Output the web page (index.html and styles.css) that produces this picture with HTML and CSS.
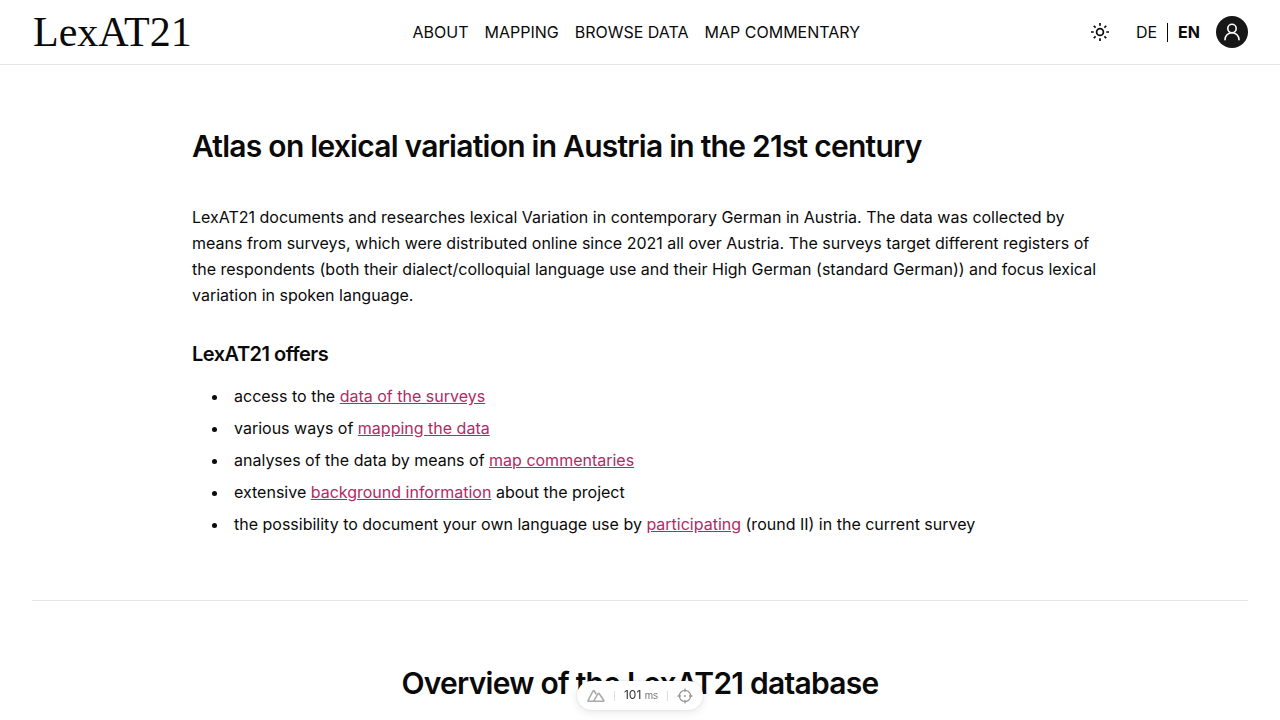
FILE: index.html
```html
<!DOCTYPE html>
<html lang="en">
<head>
<meta charset="utf-8">
<meta name="viewport" content="width=device-width, initial-scale=1">
<title>LexAT21</title>
<link rel="stylesheet" href="styles.css">
</head>
<body>
<header class="site-header">
  <a class="logo" href="#">LexAT21</a>
  <nav class="main-nav" aria-label="Main">
    <a href="#">ABOUT</a>
    <a href="#">MAPPING</a>
    <a href="#">BROWSE DATA</a>
    <a href="#">MAP COMMENTARY</a>
  </nav>
  <div class="tools">
    <button class="theme-button" type="button" aria-label="Toggle theme">
      <svg width="20" height="20" viewBox="0 0 20 20" fill="none" stroke="currentColor" stroke-width="1.7"><circle cx="10" cy="10" r="3.4"/><path d="M10 1v2.700M10 16.300V19M1 10h2.700M16.300 10H19M3.800 3.800l1.800 1.800M14.400 14.400l1.800 1.800M16.200 3.800l-1.800 1.800M5.600 14.400l-1.800 1.800"/></svg>
    </button>
    <div class="languages"><a href="#">DE</a><span class="bar"></span><a class="current" href="#">EN</a></div>
    <button class="user-button" type="button" aria-label="Account">
      <svg width="20" height="20" viewBox="0 0 20 20" fill="none" stroke="currentColor" stroke-width="1.600" stroke-linecap="round"><circle cx="10" cy="6.500" r="4.200"/><path d="M3 17.700c0-4 3-7 7-7s7 3 7 7"/></svg>
    </button>
  </div>
</header>
<main>
  <section class="intro">
    <h1>Atlas on lexical variation in Austria in the 21st century</h1>
    <p>LexAT21 documents and researches lexical Variation in contemporary German in Austria. The data was collected by means from surveys, which were distributed online since 2021 all over Austria. The surveys target different registers of the respondents (both their dialect/colloquial language use and their High German (standard German)) and focus lexical variation in spoken language.</p>
    <h2>LexAT21 offers</h2>
    <ul>
      <li>access to the <a href="#">data of the surveys</a></li>
      <li>various ways of <a href="#">mapping the data</a></li>
      <li>analyses of the data by means of <a href="#">map commentaries</a></li>
      <li>extensive <a href="#">background information</a> about the project</li>
      <li>the possibility to document your own language use by <a href="#">participating</a> (round II) in the current survey</li>
    </ul>
  </section>
  <section class="overview">
    <h2>Overview of the LexAT21 database</h2>
  </section>
</main>
<div class="devtools">
  <button type="button" aria-label="Toggle devtools">
    <svg width="18" height="14" viewBox="0 0 18 14" fill="none" stroke="currentColor" stroke-width="1.600" stroke-linejoin="round"><path d="M10 12.300H1.700Q.7 12.300 1.200 11.300L6 2Q6.700 1 7.400 2L9.200 5.300M6.500 12.300L11.100 4.700Q11.700 3.700 12.300 4.700L16.700 11.300Q17.200 12.300 16.200 12.300H10"/></svg>
  </button>
  <span class="divider"></span>
  <span class="timing">101 <small>ms</small></span>
  <span class="divider"></span>
  <button type="button" aria-label="Inspect component">
    <svg width="16" height="16" viewBox="0 0 16 16" fill="none" stroke="currentColor" stroke-width="1.300"><circle cx="8" cy="8" r="5.600"/><path d="M8 .5v3.500M8 12v3.500M.5 8H4M12 8h3.500"/><circle cx="8" cy="8" r="1" fill="currentColor" stroke="none"/></svg>
  </button>
</div>
</body>
</html>
```
FILE: styles.css
```css
* { box-sizing: border-box; }
body { margin: 0; background: #fff; color: #0a0a0a; font: 16px/24px Inter, "Liberation Sans", sans-serif; }
a { color: inherit; text-decoration: none; }
button { display: flex; align-items: center; justify-content: center; padding: 0; border: 0; background: none; color: inherit; font: inherit; cursor: pointer; }
.site-header { display: flex; justify-content: space-between; align-items: center; min-height: 65px; padding: 0 32px; border-bottom: 1px solid #e5e5e5; }
.logo { padding: 0 1px; font: 42px/48px "Liberation Serif", serif; }
.main-nav { display: flex; gap: 16px; }
.tools { display: flex; align-items: center; justify-content: flex-end; gap: 16px; }
.theme-button { width: 40px; height: 40px; }
.languages { display: flex; align-items: center; gap: 10px; }
.bar { width: 1px; height: 19px; background: currentColor; }
.current { font-weight: 700; }
.user-button { width: 32px; height: 32px; border-radius: 50%; background: #171717; color: #fff; }
.intro { max-width: 912px; margin: 0 auto; padding: 63px 0 64px; }
@media (min-width: 960px) { .intro { margin-left: calc(50% - 448px); } }
h1, .overview h2 { margin: 0; font-size: 30px; line-height: 36px; font-weight: 600; letter-spacing: -0.025em; }
.intro p { margin: 40px 0 32px; line-height: 26px; }
.intro h2 { margin: 0; font-size: 20px; line-height: 28px; font-weight: 600; letter-spacing: -0.025em; }
ul { margin: 16px 0 0; padding-left: 37px; }
li { padding-left: 5px; }
li + li { margin-top: 8px; }
li a { color: #b02a66; text-decoration: underline; }
.overview { margin: 0 32px; padding: 64px 0; border-top: 1px solid #e5e5e5; text-align: center; }
.devtools { position: fixed; bottom: 10px; left: 50%; transform: translateX(-50%); display: flex; align-items: center; gap: 9px; height: 29px; padding: 0 10px; border-radius: 15px; background: #fff; color: #aaa; box-shadow: 0 0 2px #0002, 0 2px 10px #0000001a; }
.devtools button:last-child { color: #999; }
.divider { width: 1px; height: 10px; background: #ddd; }
.timing { color: #333; font-size: 12px; line-height: 16px; }
.timing small { color: #777; font: 10px/16px "Liberation Sans", sans-serif; }
```
